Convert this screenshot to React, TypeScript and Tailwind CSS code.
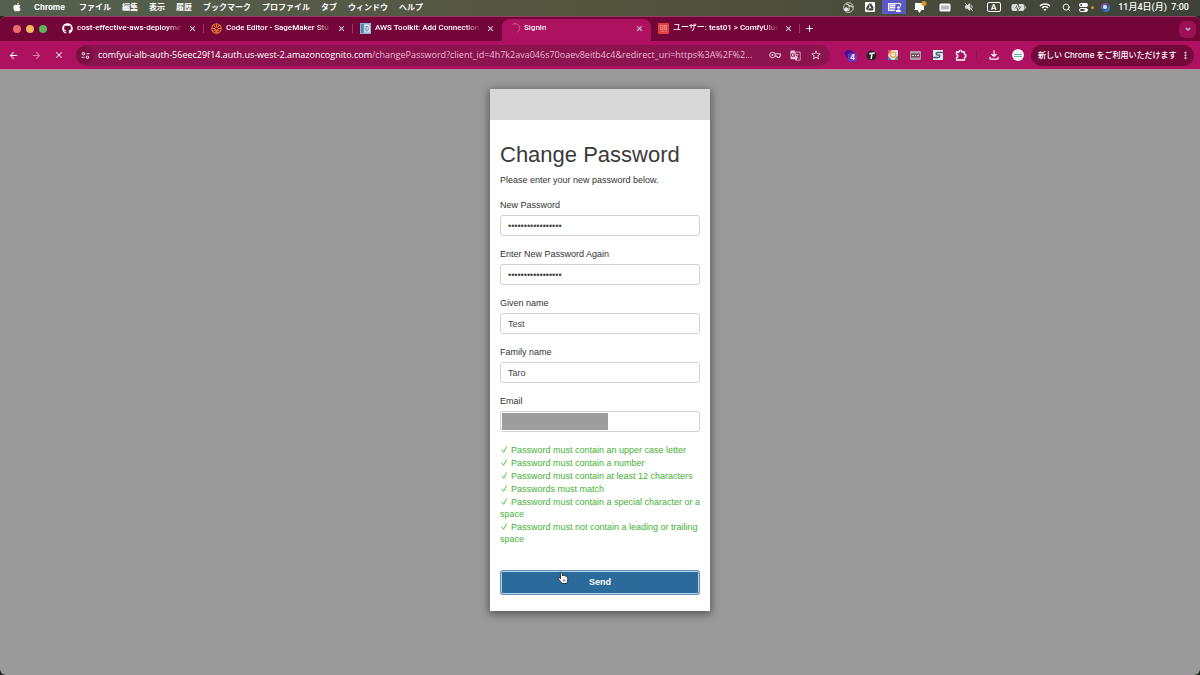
import React, { useState } from "react";
import { FaApple, FaGithub } from "react-icons/fa";
import { SiGoogledrive } from "react-icons/si";
import {
  MdArrowBack,
  MdArrowForward,
  MdAdd,
  MdClose,
  MdKeyboardArrowDown,
  MdMoreVert,
  MdOutlineFileDownload,
  MdGTranslate,
  MdStarBorder,
  MdWifi,
} from "react-icons/md";
import { Search } from "lucide-react";

const menus = [
  "ファイル",
  "編集",
  "表示",
  "履歴",
  "ブックマーク",
  "プロファイル",
  "タブ",
  "ウィンドウ",
  "ヘルプ",
];

function Slot({ className, children }: { className: string; children: React.ReactNode }) {
  return <span className={`flex h-full shrink-0 items-center justify-center ${className}`}>{children}</span>;
}

function MenuBar() {
  return (
    <header className="flex h-4 items-center bg-linear-to-r from-[#53604e] via-[#55543f] to-[#3d4338] pr-[11px] pb-[2px] pl-3 text-[8px] leading-[14px] font-semibold text-white">
      <FaApple className="mr-3 size-[10px] shrink-0" />
      <span className="mr-[14px] text-[8px] font-bold">Chrome</span>
      <nav className="flex gap-[11px] whitespace-nowrap">
        {menus.map((m) => (
          <button key={m} type="button">
            {m}
          </button>
        ))}
      </nav>
      <div className="ml-auto flex h-[14px] items-center whitespace-nowrap">
        <Slot className="w-[22px]">
          <svg viewBox="0 0 12 12" className="size-[11px]" fill="none" stroke="#e6e6e2">
            <circle cx="6" cy="6" r="5.300" strokeWidth=".9" />
            <path d="M3.500 2.500c2-.5 3 .5 3 2.500M6.500 5c2-1.500 3.500-.5 4 1M6.500 6c.5 2 0 3.500-1.500 4" strokeWidth="1.200" />
            <circle cx="3.500" cy="8" r="2.200" fill="#e6e6e2" stroke="none" />
          </svg>
        </Slot>
        <Slot className="w-[22px]">
          <span className="flex size-[10px] items-center justify-center rounded-[1px] bg-white text-[#3f4438]">
            <SiGoogledrive className="size-[8px]" />
          </span>
        </Slot>
        <Slot className="mx-px w-6 bg-[#5d58c8]">
          <svg viewBox="0 0 13 9" className="h-[9px] w-[13px]" fill="none" stroke="white">
            <path d="M8 .5H.5v7H7" fill="#a9a6ea" />
            <path d="M8 .5h4.500v3M2 2.500h5M2 4.500h5" />
            <circle cx="10.500" cy="4.500" r="1.300" fill="white" stroke="none" />
            <path d="M7.800 9c0-3.200 5.200-3.200 5.200 0z" fill="white" stroke="none" />
          </svg>
        </Slot>
        <Slot className="w-[26px]">
          <svg viewBox="0 0 14 14" className="size-[14px]">
            <path d="M2 3h9v7H8.500L6.500 13 4.500 10H1l1-1z" fill="white" />
            <circle cx="11" cy="3.500" r="2.500" fill="#d79b22" />
          </svg>
        </Slot>
        <Slot className="w-6">
          <svg viewBox="0 0 12 9" className="h-[9px] w-3">
            <rect x=".5" y=".5" width="11" height="8" rx="1.500" fill="white" />
            <path d="M3 2.500v4M5 2.500v4M7 2.500v4M9 2.500v4" stroke="#4b4f42" strokeWidth=".8" />
          </svg>
        </Slot>
        <Slot className="w-6">
          <svg viewBox="0 0 12 12" className="size-[10px]" fill="none" stroke="#d9dad5" strokeWidth="1.200">
            <path d="M2 4.500h2L7 2v8L4 7.500H2z" fill="#d9dad5" />
            <path d="M1 1l10 10M9 4c1 1 1 3 0 4" />
          </svg>
        </Slot>
        <Slot className="w-[25px]">
          <span className="flex h-[10px] w-[14px] items-center justify-center rounded-[2px] border border-white text-[8px] leading-none">
            A
          </span>
        </Slot>
        <Slot className="w-[26px]">
          <svg viewBox="0 0 16 9" className="h-[9px] w-4">
            <rect x=".5" y="1" width="13" height="7" rx="2" fill="#dcdcd8" />
            <path d="M14.300 3v3c1.200-.5 1.200-2.500 0-3z" fill="#dcdcd8" />
            <path d="M7.700 0 4.500 5h2.300L6 9l3.600-5H7.200z" fill="white" stroke="#42473b" strokeWidth=".8" />
          </svg>
        </Slot>
        <Slot className="w-[25px]">
          <MdWifi className="size-3" />
        </Slot>
        <Slot className="w-[18px]">
          <Search className="size-[9px]" strokeWidth={2.5} />
        </Slot>
        <Slot className="w-[22px] gap-[3px]">
          <svg viewBox="0 0 9 9" className="size-[9px]">
            <rect width="9" height="4" rx="2" fill="white" />
            <circle cx="2.200" cy="2" r="1" fill="#42473b" />
            <rect x=".5" y="5.500" width="8" height="3" rx="1.500" fill="none" stroke="white" />
            <circle cx="6.800" cy="7" r="1.500" fill="white" />
          </svg>
          <span className="size-[3px] rounded-full bg-[#d88a2e]" />
        </Slot>
        <Slot className="mr-[5px] w-[16px]">
          <span className="flex size-[9px] items-center justify-center rounded-full bg-linear-to-br from-[#c04c8e] via-[#3b4fa0] to-[#35a4b8]">
            <span className="size-[4px] rounded-full bg-[#d9e6fa]" />
          </span>
        </Slot>
        <time className="font-[Roboto,'Noto_Sans_CJK_JP',sans-serif] text-[9px] font-medium">11月4日(月)&nbsp; 7:00</time>
      </div>
    </header>
  );
}

function SageMakerIcon() {
  return (
    <svg viewBox="0 0 12 12" className="size-[11px] shrink-0" fill="none" stroke="#e8822b" strokeWidth="1.100">
      <circle cx="6" cy="6" r="5.200" />
      <path d="M6 1v4M3 2.500 5 5M9 2.500 7 5M1 6h3l1.500 2V11M11 6H8L6.500 8v3M3 9l1.500-1.500M9 9 7.500 7.500" />
    </svg>
  );
}

function ToolkitIcon() {
  return (
    <svg viewBox="0 0 11 11" className="size-[11px] shrink-0">
      <rect width="11" height="11" fill="#8fb2d4" />
      <rect x="1" y="1" width="2.500" height="9" fill="#5580ad" />
      <path d="M4.500 1.500h4L10 3v6.500H4.500z" fill="#dbe8f5" />
      <path d="M6 3.500v4.500h1.500c1 0 1-4.500 0-4.500z" fill="none" stroke="#4c78a8" strokeWidth=".8" />
    </svg>
  );
}

function SpinnerIcon() {
  return (
    <svg viewBox="0 0 11 11" className="size-[11px] shrink-0" fill="none" stroke="#d5619a" strokeLinecap="round">
      <path d="M4 1.200A4.500 4.500 0 0 1 8.500 9" />
    </svg>
  );
}

function CognitoIcon() {
  return (
    <svg viewBox="0 0 11 11" className="size-[11px] shrink-0">
      <rect width="11" height="11" rx="1" fill="#e0403f" />
      <path d="M2.500 2.500H5v4H2.500zM6.500 2.500h2v4h-2zM3.500 8.500h2M7 8.500h1.500" fill="none" stroke="#f4a6a0" strokeWidth=".7" />
    </svg>
  );
}

const tabs = [
  { title: "cost-effective-aws-deployme", icon: <FaGithub className="size-[11px] shrink-0" /> },
  { title: "Code Editor - SageMaker Stu", icon: <SageMakerIcon /> },
  { title: "AWS Toolkit: Add Connection", icon: <ToolkitIcon /> },
  { title: "Signin", icon: <SpinnerIcon />, active: true },
  { title: "ユーザー: test01 > ComfyUIus", icon: <CognitoIcon /> },
];

function TabStrip() {
  return (
    <div className="flex h-[25px] items-center rounded-t-md border-t border-[#9c3a68] bg-[#740538] pr-1 text-[8px] font-medium text-white">
      <div className="flex w-[55px] shrink-0 items-center gap-[5px] pb-px pl-[13px]">
        <button type="button" aria-label="閉じる" className="size-2 rounded-full bg-[#ee6a6e]" />
        <button type="button" aria-label="しまう" className="size-2 rounded-full bg-[#f4b45c]" />
        <button type="button" aria-label="拡大" className="size-2 rounded-full bg-[#5fb35c]" />
      </div>
      <div role="tablist" className="flex h-full min-w-0 items-end">
        {tabs.map((t, i) => (
          <div
            key={t.title}
            className={`flex h-[22px] w-[149px] min-w-0 items-center px-[7px] pb-1 ${
              t.active ? "rounded-t-lg bg-[#ae1160]" : ""
            }`}
          >
            <button role="tab" aria-selected={!!t.active} type="button" className="flex min-w-0 flex-1 items-center gap-1 text-left">
              {t.icon}
              <span className="min-w-0 flex-1 overflow-hidden mask-r-from-85% font-[Roboto,'Noto_Sans_CJK_JP',sans-serif] leading-3 whitespace-nowrap">
                {t.title}
              </span>
            </button>
            <button type="button" aria-label="タブを閉じる" className="ml-[5px] shrink-0">
              <MdClose className="size-[9px]" />
            </button>
            <span
              className={`-mr-[7px] ml-[6px] h-[9px] w-px shrink-0 ${i === 2 || i === 3 ? "bg-transparent" : "bg-[#a23468]"}`}
            />
          </div>
        ))}
      </div>
      <button type="button" aria-label="新しいタブ" className="ml-1 pb-px">
        <MdAdd className="size-[11px]" />
      </button>
      <button
        type="button"
        aria-label="タブを検索"
        className="ml-auto flex size-[17px] items-center justify-center rounded-md bg-[#9c1056]"
      >
        <MdKeyboardArrowDown className="size-[10px]" />
      </button>
    </div>
  );
}

function Toolbar() {
  const [path, setPath] = useState("/changePassword?client_id=4h7k2ava046s70oaev8eitb4c4&redirect_uri=https%3A%2F%2...");
  return (
    <div className="flex h-7 items-center bg-[#ae1160] pr-[6px] text-[9px] text-white">
      <button type="button" aria-label="戻る" className="ml-2 shrink-0">
        <MdArrowBack className="size-[11px]" />
      </button>
      <button type="button" aria-label="進む" className="ml-3 shrink-0 text-[#d884ac]">
        <MdArrowForward className="size-[11px]" />
      </button>
      <button type="button" aria-label="中止" className="ml-3 shrink-0">
        <MdClose className="size-[10px]" />
      </button>
      <div className="ml-3 flex h-[21px] min-w-0 flex-1 items-center rounded-full bg-[#8b144f] pr-2">
        <button type="button" aria-label="サイト情報" className="mr-1 flex size-[18px] shrink-0 items-center justify-center rounded-full bg-[#7a0f44]">
          <svg viewBox="0 0 10 10" className="size-[9px]" fill="none" stroke="#eccbdb" strokeWidth="1.200">
            <path d="M6 3h3.500M.5 7h3.500" />
            <circle cx="2.700" cy="3" r="1.400" />
            <circle cx="7.200" cy="7" r="1.400" />
          </svg>
        </button>
        <label htmlFor="address" className="shrink-0 font-['Open_Sans',sans-serif]">
          comfyui-alb-auth-56eec29f14.auth.us-west-2.amazoncognito.com
        </label>
        <input
          id="address"
          type="text"
          value={path}
          onChange={(e) => setPath(e.target.value)}
          className="min-w-0 flex-1 bg-transparent font-['Open_Sans',sans-serif] text-[#e9b8d0] outline-none"
        />
        <span className="ml-[6px] flex shrink-0 items-center gap-[9px] text-[#eccbdb]">
          <svg viewBox="0 0 12 8" className="h-2 w-3" fill="none" stroke="currentColor">
            <circle cx="3.500" cy="4" r="2.800" />
            <circle cx="3.500" cy="4" r="1" fill="currentColor" stroke="none" />
            <path d="M6 2.800h5.500v2.400h-1v1.300H8.200V5.200H6" />
          </svg>
          <MdGTranslate className="size-[11px]" />
          <MdStarBorder className="size-3" />
        </span>
      </div>
      <div className="ml-[9px] flex h-full shrink-0 items-center">
        <Slot className="w-[22px]">
          <span className="relative flex size-[14px]">
            <svg viewBox="0 0 14 14" className="size-[14px]">
              <path d="M1 5 4 2h4l3 3-3 5H4z" fill="#4a0f9a" />
            </svg>
            <span className="absolute top-[5px] left-[5px] flex size-[9px] items-center justify-center rounded-[2px] bg-[#6b35b8] text-[7px] leading-none font-bold">
              4
            </span>
          </span>
        </Slot>
        <Slot className="w-[20px]">
          <svg viewBox="0 0 12 12" className="size-[11px]">
            <circle cx="6" cy="6" r="5.500" fill="#2b2026" />
            <path d="M3.500 4 9.500 3.200M6.700 3.500 5.500 10" stroke="white" strokeWidth="1.600" />
          </svg>
        </Slot>
        <Slot className="w-[23px]">
          <svg viewBox="0 0 10 10" className="size-[10px]">
            <rect width="10" height="10" rx="1" fill="#e7d9e6" />
            <path d="M0 0h4L0 5z" fill="#e85a3f" />
            <path d="M0 10V6l4 4z" fill="#3b82d0" />
            <path d="M10 5v5H6z" fill="#55a860" />
            <circle cx="5" cy="4.800" r="3.200" fill="#e7b04a" />
            <circle cx="5" cy="4.800" r="1.800" fill="#f4f0fa" />
          </svg>
        </Slot>
        <Slot className="w-[22px]">
          <svg viewBox="0 0 11 9" className="h-[9px] w-[11px]">
            <rect width="11" height="9" rx="1" fill="#b69aa7" />
            <rect x="1" y="2.500" width="9" height="4" fill="#655260" />
            <path d="M2 4.500h2M5 4.500h1M7 4.500h2" stroke="#e0d0d8" />
          </svg>
        </Slot>
        <Slot className="w-[23px]">
          <svg viewBox="0 0 10 10" className="size-[10px]">
            <rect width="10" height="10" fill="#e6f0f3" />
            <path d="M10 2.500H5C2.500 2.500 2.500 5 5 5s2.500 2.500 0 2.500H0" fill="none" stroke="#39627a" strokeWidth="1.300" />
          </svg>
        </Slot>
        <button type="button" aria-label="拡張機能" className="flex w-[23px] justify-center">
          <svg viewBox="0 0 12 12" className="size-3" fill="none" stroke="currentColor" strokeWidth="1.300">
            <path d="M1.500 3H4.200c-.4-2.200 3-2.200 2.600 0H9.500V5.500c2 0 2 2.800 0 2.800V11H1.500V8.500c2-.2 2-2.600 0-2.800z" strokeLinejoin="round" />
          </svg>
        </button>
        <span className="mx-1 h-[10px] w-px bg-[#8b144f]" />
        <button type="button" aria-label="ダウンロード" className="flex w-[26px] justify-center">
          <MdOutlineFileDownload className="size-[14px]" />
        </button>
        <button type="button" aria-label="プロフィール" className="flex w-[22px] justify-center">
          <span className="flex size-3 flex-col items-center justify-center gap-px rounded-full bg-[#eef3f2]">
            <span className="h-px w-2 bg-[#6fb5a8]" />
            <span className="h-px w-2 bg-[#6fb5a8]" />
          </span>
        </button>
        <button
          type="button"
          className="ml-[2px] flex h-[21px] w-[163px] items-center justify-between rounded-full bg-[#74083a] pr-[3px] pl-[7px] text-[8px] font-medium whitespace-nowrap"
        >
          <span>新しい Chrome をご利用いただけます</span>
          <MdMoreVert className="size-[11px] shrink-0" />
        </button>
      </div>
    </div>
  );
}

const fields = [
  { id: "new-password", label: "New Password", type: "password", value: "Abcdefgh-12345678" },
  { id: "confirm-password", label: "Enter New Password Again", type: "password", value: "Abcdefgh-12345678" },
  { id: "given-name", label: "Given name", type: "text", value: "Test" },
  { id: "family-name", label: "Family name", type: "text", value: "Taro" },
  { id: "email", label: "Email", type: "email", value: "", masked: true },
];

const rules = [
  "Password must contain an upper case letter",
  "Password must contain a number",
  "Password must contain at least 12 characters",
  "Passwords must match",
  "Password must contain a special character or a space",
  "Password must not contain a leading or trailing space",
];

function Check() {
  return (
    <svg viewBox="0 0 8 8" className="mr-[3px] ml-px inline-block size-[7px] align-baseline" fill="none" stroke="currentColor">
      <path d="M1 4.500 3 7.200 6.500.5" />
    </svg>
  );
}

function HandPointer() {
  return (
    <svg
      viewBox="0 0 12 14"
      className="pointer-events-none absolute top-[1px] left-[57px] h-[14px] w-3"
      fill="white"
      stroke="#26333f"
      strokeWidth="1"
      strokeLinejoin="round"
    >
      <path d="M3.200 1.500c.6-.8 1.500-.5 1.700.3L5.600 5l.6-.6c.6-.3 1 0 1.300.5.600-.4 1.200-.1 1.400.5.800-.3 1.500 0 1.600.9l.3 2.500c0 1.300-.8 2.200-1 3.700H5c-.7-1.600-2.300-2.700-3.600-4.400-.6-1 .3-1.700 1.200-1.200l1.100.8z" />
      <path d="M6.300 8.500v2M7.900 8.500v2" fill="none" strokeWidth=".7" />
    </svg>
  );
}

function PasswordCard() {
  return (
    <form
      onSubmit={(e) => e.preventDefault()}
      className="w-[220px] self-start bg-white text-[9px] leading-[13px] text-[#333] shadow-[0_2px_8px_1px_rgba(0,0,0,0.45)]"
    >
      <div className="h-[31px] bg-[#d8d8d8]" />
      <div className="px-[10px] pt-[22px] pb-4">
        <h1 className="text-[22px] leading-[26px] whitespace-nowrap text-[#3a3a3a]">Change Password</h1>
        <p className="mt-[6px]">Please enter your new password below.</p>
        <div className="mt-3 flex flex-col gap-3">
          {fields.map((f) => (
            <div key={f.id} className="flex flex-col gap-[3px]">
              <label htmlFor={f.id}>{f.label}</label>
              <div className="relative flex">
                <input
                  id={f.id}
                  type={f.type}
                  defaultValue={f.value}
                  className="h-[21px] w-full rounded-[3px] border border-[#d2d2d2] bg-white px-[7px] text-[#444] outline-none"
                />
                {f.masked && <span className="absolute inset-y-[2px] left-[2px] w-[106px] bg-[#9d9d9d]" />}
              </div>
            </div>
          ))}
        </div>
        <ul className="mt-3 -mr-1 flex flex-col gap-px leading-3 text-[#46b135]">
          {rules.map((r) => (
            <li key={r}>
              <Check />
              {r}
            </li>
          ))}
        </ul>
        <div className="relative mt-[25px] flex">
          <button
            type="submit"
            className="h-[25px] w-full rounded-[3px] border border-[#5f95bb] bg-[#2a6b9c] font-bold text-white inset-ring inset-ring-[#b8d3e6]"
          >
            Send
          </button>
          <HandPointer />
        </div>
      </div>
    </form>
  );
}

export default function App() {
  return (
    <div className="flex min-h-screen flex-col bg-[#20251f] font-[Inter,'Noto_Sans_CJK_JP',sans-serif]">
      <MenuBar />
      <TabStrip />
      <Toolbar />
      <main className="flex flex-1 justify-center rounded-b-md border-t border-[#b58a9d] bg-[#9a9a9a] pt-[19px] pb-8 font-['Liberation_Sans',Arial,sans-serif]">
        <PasswordCard />
      </main>
    </div>
  );
}
